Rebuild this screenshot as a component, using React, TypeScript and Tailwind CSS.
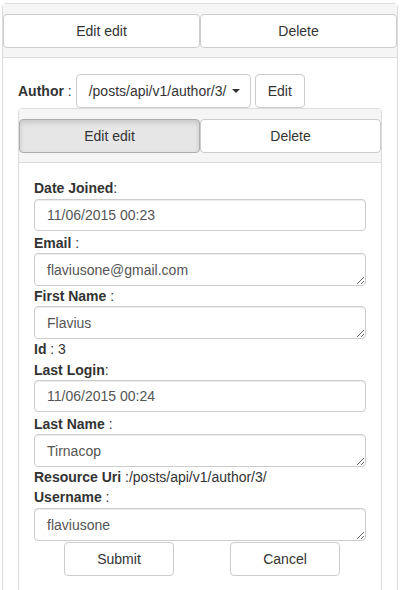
import React from 'react'

const font = { fontFamily: '"Liberation Sans", Arial, sans-serif' }

function Btn({
  children,
  active,
  className = '',
}: {
  children: React.ReactNode
  active?: boolean
  className?: string
}) {
  return (
    <button
      type="button"
      className={
        'h-[34px] rounded-[4px] border px-3 text-[14px] leading-5 text-[#333] ' +
        (active
          ? 'border-[#adadad] bg-[#e6e6e6] shadow-[inset_0_3px_5px_rgba(0,0,0,0.125)] '
          : 'border-[#ccc] bg-white ') +
        className
      }
    >
      {children}
    </button>
  )
}

function Label({ name, colon = ' :' }: { name: string; colon?: string }) {
  return (
    <div className="h-5 leading-5 text-[#333]">
      <b>{name}</b>
      {colon}
    </div>
  )
}

function Input({ value, className = '' }: { value: string; className?: string }) {
  return (
    <input
      readOnly
      value={value}
      className={
        'block h-[32px] w-full rounded-[4px] border border-[#ccc] bg-white px-3 text-[14px] text-[#555] shadow-[inset_0_1px_1px_rgba(0,0,0,0.075)] outline-none ' +
        className
      }
      style={font}
    />
  )
}

function Area({ value }: { value: string }) {
  return (
    <textarea
      readOnly
      defaultValue={value}
      rows={1}
      className="block h-[33px] w-full rounded-[4px] border border-[#ccc] bg-white px-3 py-[6px] text-[14px] leading-5 text-[#555] shadow-[inset_0_1px_1px_rgba(0,0,0,0.075)] outline-none"
      style={font}
    />
  )
}

export default function App() {
  return (
    <div className="h-[590px] w-[401px] overflow-hidden bg-white text-[14px] text-[#333]" style={font}>
      <div className="ml-[2px] mt-[3px] w-[396px] rounded-[4px] border border-[#ddd]">
        {/* outer heading */}
        <div className="flex border-b border-[#ddd] bg-[#f5f5f5] pb-[9px] pt-[10px]">
          <Btn className="flex-1">Edit edit</Btn>
          <Btn className="flex-1">Delete</Btn>
        </div>

        <div className="px-[15px] pt-[16px]">
          <div className="flex h-[34px] items-center">
            <span className="leading-5">
              <b>Author</b> :
            </span>
            <Btn className="ml-[4px] flex w-[175px] items-center">
              /posts/api/v1/author/3/
              <span className="ml-[6px] inline-block h-0 w-0 border-x-4 border-t-4 border-x-transparent border-t-[#333]" />
            </Btn>
            <Btn className="ml-[4px] w-[50px]">Edit</Btn>
          </div>

          {/* inner panel */}
          <div className="h-[500px] rounded-t-[4px] border border-[#ddd]">
            <div className="flex border-b border-[#ddd] bg-[#f5f5f5] pb-[9px] pt-[10px]">
              <Btn active className="flex-1">
                Edit edit
              </Btn>
              <Btn className="flex-1">Delete</Btn>
            </div>

            <div className="px-[15px] pt-[15px]">
              <Label name="Date Joined" colon=":" />
              <Input value="11/06/2015 00:23" className="mb-[2px] mt-px" />
              <Label name="Email" />
              <Area value="flaviusone@gmail.com" />
              <Label name="First Name" />
              <Area value="Flavius" />
              <Label name="Id" colon=" : 3" />
              <div className="h-px" />
              <Label name="Last Login" colon=":" />
              <Input value="11/06/2015 00:24" className="mb-[2px]" />
              <Label name="Last Name" />
              <Area value="Tirnacop" />
              <Label name="Resource Uri" colon=" :/posts/api/v1/author/3/" />
              <Label name="Username" />
              <div className="h-px" />
              <Area value="flaviusone" />
              <div className="ml-[2px] mt-px grid w-[332px] grid-cols-2">
                <div className="flex justify-center">
                  <Btn className="w-[110px]">Submit</Btn>
                </div>
                <div className="flex justify-center">
                  <Btn className="w-[110px]">Cancel</Btn>
                </div>
              </div>
            </div>
          </div>
        </div>
      </div>
    </div>
  )
}
